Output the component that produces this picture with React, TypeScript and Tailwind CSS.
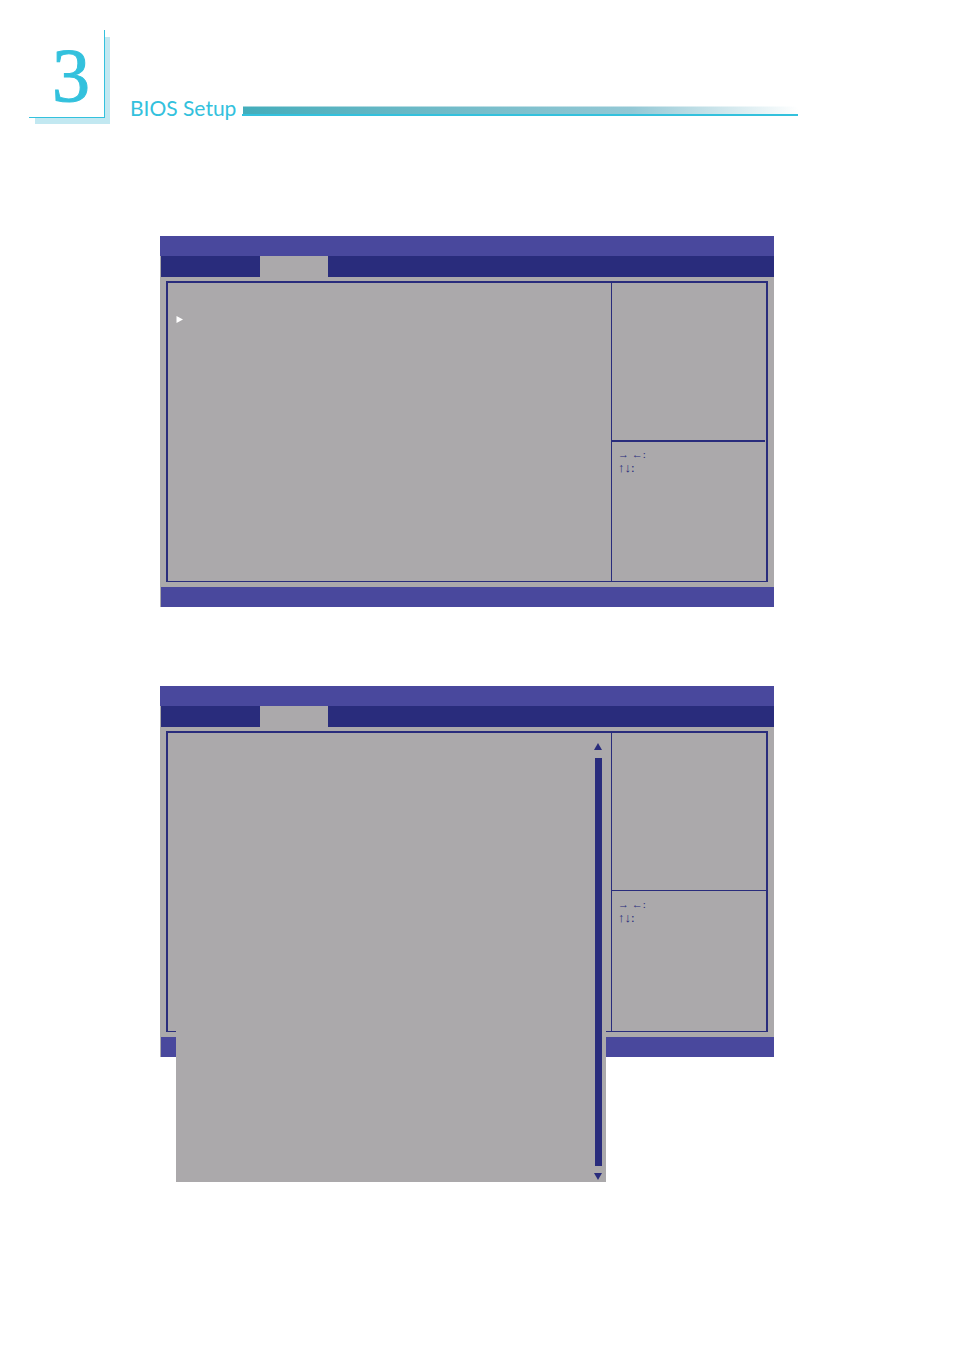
import type { ReactNode } from "react";

function Header() {
  return (
    <header className="flex items-end pt-[30px] pr-[156px] pl-[29px]">
      <div className="relative h-[88px] w-[76px] shrink-0">
        <div className="absolute top-[7px] -right-[5px] -bottom-[6px] left-[6px] bg-[#c2e8f1]" />
        <div className="relative flex h-full items-center justify-center border-r border-b border-[#33c1dd] bg-white pt-[2px] pl-[9px] font-['Liberation_Serif',serif] text-[76px] leading-[88px] text-[#33c1dd] [-webkit-text-stroke:1px_#33c1dd]">
          3
        </div>
      </div>
      <h1 className="ml-[25px] w-[112px] shrink-0 font-['Lato',sans-serif] text-[21px] leading-[20px] whitespace-nowrap text-[#33c1dd]">
        BIOS Setup
      </h1>
      <div className="mb-[2px] flex-1 border-b-2 border-[#33c1dd]">
        <div className="ml-px h-[8px] border-t border-white/50 bg-linear-to-r from-[#43adbb] via-[#93c8d5] via-70% to-white" />
      </div>
    </header>
  );
}

type TriangleProps = { points: string; className: string };

function Triangle({ points, className }: TriangleProps) {
  return (
    <svg viewBox="0 0 8 8" className={`size-[8px] ${className}`} aria-hidden="true">
      <polygon points={points} fill="currentColor" />
    </svg>
  );
}

type ScreenProps = { ruleClass: string; children: ReactNode };

function SetupScreen({ ruleClass, children }: ScreenProps) {
  return (
    <section className="relative bg-[#aba9ab]">
      <div className="h-[20px] bg-[#49489d]" />
      <div className="ml-px flex h-[21px] bg-[#292c7c]">
        <div className="ml-[99px] w-[68px] bg-[#aba9ab]" />
      </div>
      <div className="px-[6px] pt-[4px] pb-[5px]">
        <div className="flex h-[301px] border-2 border-b border-[#292c7c]">
          <div className="flex-1 px-[8px] pt-[32px]">{children}</div>
          <div className="flex w-[155px] flex-col border-l border-[#292c7c]">
            <div className={`border-[#292c7c] ${ruleClass}`} />
            <div className="px-[6px] pt-[6px] font-['Liberation_Serif',serif] leading-[13px] text-[#292c7c]">
              <p className="text-[11px] leading-[13px]">→ ←:</p>
              <p className="text-[13px] leading-[13px]">↑↓:</p>
            </div>
          </div>
        </div>
      </div>
      <div className="ml-px h-[20px] bg-[#49489d]" />
    </section>
  );
}

function ScrollingList() {
  return (
    <div className="absolute top-[47px] right-[168px] left-[16px] flex h-[449px] flex-col items-end bg-[#aba9ab] pt-[10px] pr-[4px] pb-px text-[#292c7c]">
      <Triangle points="4,0 8,7 0,7" className="" />
      <div className="mt-[7px] mb-[7px] w-[7px] flex-1 bg-[#292c7c]" />
      <Triangle points="0,0 8,0 4,7" className="" />
    </div>
  );
}

export default function App() {
  return (
    <div className="min-h-screen bg-white">
      <Header />
      <main className="flex flex-col gap-[79px] pt-[118px] pr-[180px] pb-[293px] pl-[160px]">
        <SetupScreen ruleClass="mr-px h-[159px] border-b-2">
          <Triangle points="0.5,1 7,4.5 0.5,8" className="text-white" />
        </SetupScreen>
        <SetupScreen ruleClass="mb-px h-[158px] border-b">
          <ScrollingList />
        </SetupScreen>
      </main>
    </div>
  );
}
